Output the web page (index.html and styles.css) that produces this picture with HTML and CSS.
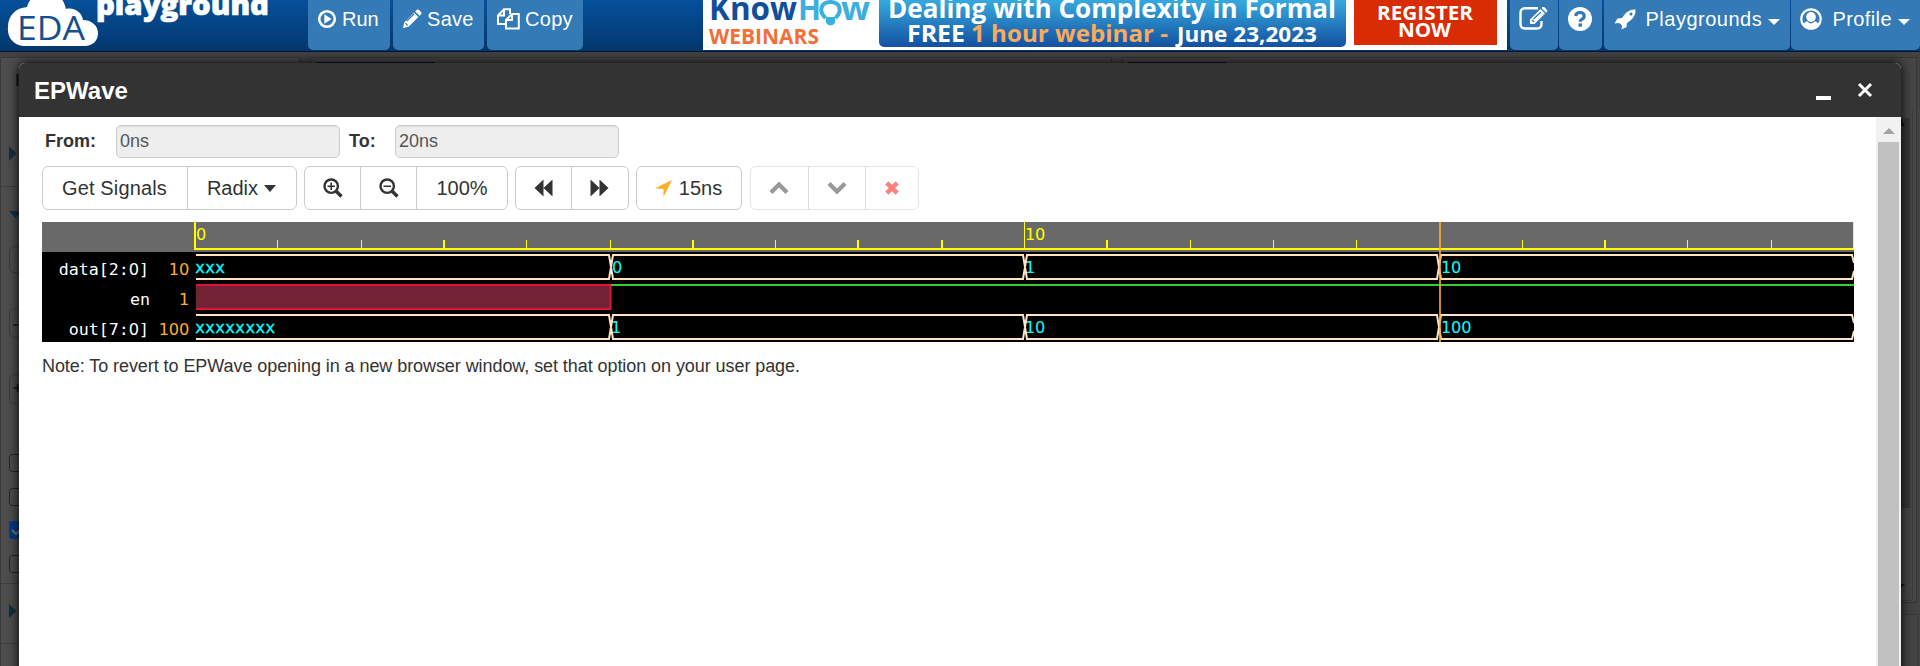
FILE: index.html
```
<!DOCTYPE html>
<html lang="en">
<head>
<meta charset="utf-8">
<title>EPWave</title>
<link rel="stylesheet" href="styles.css">
</head>
<body>
<header class="navbar">
  <svg class="logo" width="275" height="51" viewBox="0 0 275 51" role="img" aria-label="EDA playground">
    <path class="cloud" d="M24 46C12 45 7 36 8 27C8 15 16 8 27 7C28 3 30 0 32-2H61C64 2 65 5 66 9C75 7 82 13 83 20C92 20 98 26 98 33C98 41 93 45 86 46Z"/>
    <text class="logo-eda" x="17" y="40" textLength="68" lengthAdjust="spacingAndGlyphs">EDA</text>
    <text class="logo-name" x="96" y="15" textLength="173" lengthAdjust="spacingAndGlyphs">playground</text>
  </svg>
  <nav class="actions">
    <a class="nav-btn run"><svg width="20" height="20" viewBox="0 0 20 20"><circle cx="10" cy="10" r="7.8" fill="none" stroke="#fff" stroke-width="2.6"/><path d="M7.3 5.3L14.6 10L7.3 14.7Z"/></svg><span>Run</span></a>
    <a class="nav-btn save"><svg width="20" height="20" viewBox="0 0 20 20"><path d="M1 19L2.2 13.4L12 3.6L16.4 8L6.6 17.8ZM13.2 2.4L14.8.8Q15.8 0 16.8.8L19.2 3.2Q20 4.2 19.2 5.2L17.6 6.8Z"/><path class="cut" d="M3.4 14.2L5.8 16.6M4.8 12L12.2 4.8"/></svg><span>Save</span></a>
    <a class="nav-btn copy"><svg width="23" height="22" viewBox="0 0 23 22"><path class="line" d="M8 16H1V7.5L7 1.200H13V6M7 1.200V7.500H1M9 20.600V12L15 6H21.800V20.600ZM15 6V12H9"/></svg><span>Copy</span></a>
  </nav>
  <svg class="banner" width="804" height="50" viewBox="0 0 804 50" role="img" aria-label="KnowHow Webinars">
    <defs><linearGradient id="sky" x2="0" y2="1"><stop stop-color="#36a7dc"/><stop offset=".2" stop-color="#36a7dc"/><stop offset="1" stop-color="#1351a0"/></linearGradient></defs>
    <rect width="804" height="50" fill="#fff"/>
    <text class="know" x="6" y="20" textLength="88" lengthAdjust="spacingAndGlyphs">Know</text>
    <text class="how" x="95" y="20" textLength="23" lengthAdjust="spacingAndGlyphs">H</text>
    <path d="M122.500 18C115 11 118 2 127.500 2S140 11 132.500 18" fill="none" stroke="#3bb0de" stroke-width="4"/><path d="M123 17H132V23Q127.500 28 123 23Z" fill="#3bb0de"/>
    <text class="how" x="138" y="20" textLength="29" lengthAdjust="spacingAndGlyphs">w</text>
    <text class="web" x="6" y="44" textLength="110" lengthAdjust="spacingAndGlyphs">WEBINARS</text>
    <rect x="176" y="-10" width="467" height="57" rx="5" fill="url(#sky)"/>
    <text class="headline" x="185" y="17.500" textLength="448" lengthAdjust="spacingAndGlyphs">Dealing with Complexity in Formal</text>
    <text class="subline" x="204" y="42" textLength="58" lengthAdjust="spacingAndGlyphs">FREE</text>
    <text class="subline accent" x="268" y="42" textLength="197" lengthAdjust="spacingAndGlyphs">1 hour webinar -</text>
    <text class="subline date" x="474" y="42" textLength="140" lengthAdjust="spacingAndGlyphs">June 23,2023</text>
    <rect x="651" y="-1" width="143" height="46" fill="#d92b04"/>
    <text class="register" x="674" y="20" textLength="96" lengthAdjust="spacingAndGlyphs">REGISTER</text>
    <text class="register" x="695" y="37" textLength="53" lengthAdjust="spacingAndGlyphs">NOW</text>
  </svg>
  <nav class="account">
    <a class="nav-btn edit"><svg width="30" height="26" viewBox="0 0 30 26"><path class="line edit-box" d="M19 1.300H6Q1.500 1.300 1.500 6V17Q1.500 21.500 6 21.500H18Q22.500 21.500 22.500 17V14"/><path d="M11 17V12.500L21.500 2L26 6.500L15.500 17ZM22.500 1L23.500 0Q24.500-.5 25.500.3L28 3Q28.500 4 28 4.800L27 5.800Z"/><path class="cut" d="M13 13L15 15M14.500 12L22 5"/></svg></a>
    <a class="nav-btn help"><svg width="26" height="26" viewBox="0 0 26 26"><circle cx="13" cy="12" r="12"/><path d="M8.700 9Q9 5.500 13 5.500T17.200 9Q17.200 11.200 15 12.300Q13.200 13.200 13.200 14.800" fill="none" stroke="#337ab7" stroke-width="3.200"/><rect x="11.500" y="16.400" width="3.500" height="3.300" fill="#337ab7"/></svg></a>
    <a class="nav-btn playgrounds"><svg width="22" height="22" viewBox="0 0 22 22"><path d="M21.500 1.500Q15 1.200 11 6L8 10L3.500 10.500L.5 15.500L5 15Q7 16 8 17.500L7.500 21.500L12.500 19L13 15L17 12Q21.800 8 21.500 1.500Z"/><circle cx="17" cy="6" r="1.500" fill="#337ab7"/></svg><span>Playgrounds</span><i class="caret"></i></a>
    <a class="nav-btn profile"><svg width="22" height="22" viewBox="0 0 22 22"><circle cx="11" cy="11" r="9.700" fill="none" stroke="#fff" stroke-width="2.200"/><ellipse cx="11" cy="9" rx="4.800" ry="5"/><path d="M3.500 16Q5 13.500 7 13.300Q11 17.500 15 13.300Q17 13.500 18.500 16Q15.500 21 11 21T3.500 16Z"/></svg><span>Profile</span><i class="caret"></i></a>
  </nav>
</header>

<main class="stage">
  <svg class="backdrop" width="1920" height="614" viewBox="0 52 1920 614" aria-hidden="true">
    <rect y="52" width="1920" height="614" fill="#424242"/>
    <rect x=".5" y="57.5" width="299" height="620" fill="#4d4d4d" stroke="#3a3a3a"/>
    <rect x="310.5" y="57.5" width="801" height="620" fill="#464646" stroke="#363636" />
    <rect x="1122.5" y="57.5" width="794" height="545" fill="#464646" stroke="#363636"/>
    <path d="M316 62.5H435M1128 62.5H1226" stroke="#0a1638"/>
    <rect x="1901" y="118" width="9" height="390" fill="#363636"/>
    <path d="M1912.5 110V600M1901 600.5H1912" stroke="#3a3a3a"/>
    <rect x="1880.5" y="614.5" width="37" height="70" fill="#444" stroke="#383838"/>
    <path d="M1898 126L1901 119L1905 126ZM1900 584H1905L1901 588Z" fill="#111"/>
    <path d="M9 146L16.5 153.500L9 161ZM9 211H22L15.500 218ZM9 604L16.500 611L9 618Z" fill="#122f43"/>
    <path d="M1 186.500H19M1 583.500H19M1 643.500H19" stroke="#3e3e3e"/>
    <g fill="none" stroke="#3c3c3c"><rect x="9.500" y="246.500" width="30" height="26" rx="5"/><rect x="9.500" y="308.500" width="30" height="29" rx="5"/><rect x="9.500" y="374.500" width="30" height="29" rx="5"/></g>
    <path d="M13 325H18M13.500 388H22M17.500 384V392" stroke="#151515" stroke-width="1.500"/>
    <g fill="none" stroke="#252525"><rect x="9.500" y="454.500" width="17" height="17" rx="3"/><rect x="9.500" y="488.500" width="17" height="17" rx="3"/><rect x="9.500" y="555.500" width="17" height="17" rx="3"/></g>
    <rect x="9" y="521" width="18" height="18" rx="3" fill="#033c85"/><path d="M12 530L16 534L23 527" fill="none" stroke="#777" stroke-width="2"/>
    <path d="M17.500 74V86" stroke="#0a1022" stroke-width="2"/>
  </svg>
  <section class="dialog">
    <header class="dialog-head">
      <h1>EPWave</h1>
      <div class="window-controls"><i class="minimize"></i><svg width="16" height="16" viewBox="0 0 16 16"><path d="M2 2L14 14M14 2L2 14" stroke="#fff" stroke-width="3"/></svg></div>
    </header>
    <div class="dialog-body">
      <div class="content">
        <div class="range">
          <label class="from-label">From:</label><div class="field">0ns</div>
          <label class="to-label">To:</label><div class="field">20ns</div>
        </div>
        <div class="toolbar">
          <div class="group g1"><button>Get Signals</button><button>Radix<i class="caret"></i></button></div>
          <div class="group g2">
            <button><svg width="20" height="20" viewBox="0 0 20 20"><circle cx="8.200" cy="8.200" r="6.700" class="ring"/><path class="handle" d="M13.200 13.200L18.500 18.500"/><path d="M4.500 8.200H12M8.200 4.500V12" stroke="#333" stroke-width="1.600"/></svg></button>
            <button><svg width="20" height="20" viewBox="0 0 20 20"><circle cx="8.200" cy="8.200" r="6.700" class="ring"/><path class="handle" d="M13.200 13.200L18.500 18.500"/><path d="M4.500 8.200H12" stroke="#333" stroke-width="1.600"/></svg></button>
            <button>100%</button>
          </div>
          <div class="group g3">
            <button><svg width="19" height="18" viewBox="0 0 19 18"><path d="M9.500.5V17.500L.500 9ZM18.500.5V17.500L9.500 9Z"/></svg></button>
            <button><svg width="19" height="18" viewBox="0 0 19 18"><path d="M.500.5V17.500L9.500 9ZM9.500.5V17.500L18.500 9Z"/></svg></button>
          </div>
          <div class="group g4"><button><svg width="17" height="17" viewBox="0 0 17 17"><path fill="#ffad29" d="M17 0L8.500 17V9L0 8.300Z"/></svg><span>15ns</span></button></div>
          <div class="group g5">
            <button><svg width="20" height="14" viewBox="0 0 20 14"><path class="chev" d="M2 11.500L10 3.500L18 11.500"/></svg></button>
            <button><svg width="20" height="14" viewBox="0 0 20 14"><path class="chev" d="M2 2.500L10 10.500L18 2.500"/></svg></button>
            <button><svg width="14" height="14" viewBox="0 0 14 14"><path d="M1.800 1.800L12.200 12.200M12.200 1.800L1.800 12.200" stroke="#ff8080" stroke-width="4.500"/></svg></button>
          </div>
        </div>
        <svg class="wave" width="1812" height="120" viewBox="42 222 1812 120">
          <rect x="42" y="222" width="1812" height="120"/>
          <rect x="42" y="222" width="1812" height="30" fill="#696969"/>
          <g fill="#ff0">
            <rect x="194" y="222" width="2" height="28"/><rect x="194" y="248" width="1660" height="2"/>
            <rect x="1024" y="222" width="1" height="26"/><rect x="1853" y="222" width="1" height="26"/>
            <path d="M277 240h1v8h-1zM361 240h1v8h-1zM443 240h2v8h-2zM526 240h1v8h-1zM610 240h1v8h-1zM692 240h2v8h-2zM775 240h1v8h-1zM857 240h2v8h-2zM941 240h2v8h-2zM1106 240h2v8h-2zM1190 240h1v8h-1zM1273 240h1v8h-1zM1356 240h1v8h-1zM1522 240h1v8h-1zM1604 240h2v8h-2zM1687 240h1v8h-1zM1771 240h1v8h-1z"/>
            <text class="num" x="196" y="240">0</text><text class="num" x="1025" y="240">10</text>
          </g>
          <g class="bus"><path d="M196 255H609L613 279H1023L1027 255H1437L1441 279H1852L1854 271M196 279H609L613 255H1023L1027 279H1437L1441 255H1852L1854 263"/></g>
          <g class="bus"><path d="M196 315H609L613 339H1023L1027 315H1437L1441 339H1852L1854 331M196 339H609L613 315H1023L1027 339H1437L1441 315H1852L1854 323"/></g>
          <rect x="196" y="284" width="415" height="26" fill="#722233"/><path d="M196 285H611M196 309H611M610.500 284V310" fill="none" stroke="#dc143c" stroke-width="2"/>
          <path d="M611 285H1854" stroke="#32cd32" stroke-width="2"/>
          <g fill="#fff"><text x="149" y="275" text-anchor="end">data[2:<tspan class="num">0</tspan>]</text><text x="150" y="305" text-anchor="end">en</text><text x="149" y="335" text-anchor="end">out[7:<tspan class="num">0</tspan>]</text></g>
          <g fill="#ffad29"><text class="num" x="189" y="275" text-anchor="end">10</text><text class="num" x="189" y="305" text-anchor="end">1</text><text class="num" x="189" y="335" text-anchor="end">100</text></g>
          <g fill="#0ff"><text class="unknown" x="195" y="273">xxx</text><text class="num" x="612" y="273">0</text><text class="num" x="1025" y="273">1</text><text class="num" x="1441" y="273">10</text><text class="unknown" x="195" y="333">xxxxxxxx</text><text class="num" x="611" y="333">1</text><text class="num" x="1025" y="333">10</text><text class="num" x="1441" y="333">100</text></g>
          <rect x="1439" y="222" width="2" height="120" fill="#ffad29" opacity=".8"/>
        </svg>
        <p class="note">Note: To revert to EPWave opening in a new browser window, set that option on your user page.</p>
      </div>
      <div class="scrollbar"><i class="arrow-up"></i><div class="thumb"></div></div>
    </div>
  </section>
</main>
</body>
</html>
```
FILE: styles.css
```
* { box-sizing: border-box; }
body { margin: 0; height: 666px; overflow: hidden; background: #444; color: #333; font-family: "Liberation Sans", Arial, sans-serif; }
svg { display: block; flex: none; }
.navbar { display: flex; align-items: flex-start; height: 52px; background: linear-gradient(#05509b, #04407e 65%, #04366b); border-bottom: 1px solid #02162c; }
.logo { margin-right: 33px; }
.cloud { fill: #fff; }
.logo-eda { font: 33px "Open Sans", sans-serif; fill: #15508c; }
.logo-name { font: 800 29px "Open Sans", sans-serif; fill: #fff; stroke: #fff; stroke-width: .7px; }
.actions { display: flex; gap: 3px; width: 395px; }
.nav-btn { display: flex; align-items: flex-start; height: 50px; background: #337ab7; border-radius: 0 0 5px 5px; color: #fff; font-size: 20px; line-height: 23px; padding-top: 8px; }
.nav-btn svg { fill: #fff; }
.nav-btn .line { fill: none; stroke: #fff; stroke-width: 2; }
.nav-btn .edit-box { stroke-width: 2.4; }
.nav-btn .cut { fill: none; stroke: #337ab7; stroke-width: 1.2; }
.nav-btn.run { width: 82px; padding-left: 9px; gap: 5px; }
.nav-btn.save { width: 91px; padding-left: 9px; gap: 5px; letter-spacing: .3px; }
.nav-btn.copy { width: 96px; padding-left: 10px; gap: 5px; letter-spacing: .3px; }
.actions .nav-btn svg { margin-top: 1px; }
.actions .copy svg { margin-top: 0; }
.know { font: bold 33px "Open Sans", sans-serif; fill: #124f9b; }
.how { font: bold 33px "Open Sans", sans-serif; fill: #3bb0de; }
.web { font: bold 22px "Open Sans", sans-serif; fill: #f26f3c; }
.headline { font: bold 26px "Open Sans", sans-serif; fill: #fff; }
.subline { font: bold 24px "Open Sans", sans-serif; fill: #fff; }
.accent { fill: #fbab5c; }
.date { font-size: 22px; }
.register { font: bold 20px "Open Sans", sans-serif; fill: #fff; }
.account { display: flex; padding-left: 3px; }
.edit { width: 48px; padding-left: 9px; margin-right: 1px; }
.help { width: 43.5px; padding-left: 8px; margin-right: 2px; }
.account .edit, .account .help { padding-top: 7px; }
.playgrounds { width: 185.5px; padding-left: 10px; letter-spacing: .5px; }
.playgrounds span { margin-left: 9.5px; }
.profile { width: 129.5px; padding-left: 9px; margin-left: 1px; letter-spacing: .4px; }
.profile span { margin-left: 11px; }
.caret { width: 0; height: 0; border: 6px solid transparent; border-top-color: currentColor; border-bottom: 0; margin-left: 6px; }
.nav-btn .caret { margin-top: 11px; }
.stage { display: grid; height: 614px; overflow: hidden; }
.backdrop, .dialog { grid-area: 1 / 1; }
.dialog { display: flex; flex-direction: column; margin: 11px 19px 0; height: 620px; width: 1882px; background: #fff; border-radius: 6px 6px 0 0; box-shadow: 0 0 12px #000; overflow: hidden; }
.dialog-head { display: flex; justify-content: space-between; align-items: center; height: 54px; flex: none; background: #333; color: #fff; padding: 0 28px 0 15px; }
h1 { margin: 0; padding-top: 1px; font-size: 24px; line-height: 54px; }
.window-controls { display: flex; align-items: center; gap: 26px; }
.minimize { width: 15px; height: 4px; background: #fff; margin-top: 16px; }
.dialog-body { display: flex; flex: 1; }
.content { flex: 1; padding: 8px 22px 0 23px; }
.range { display: flex; align-items: center; height: 33px; font-size: 18px; font-weight: bold; }
.from-label { width: 74px; padding-left: 3px; }
.to-label { width: 55px; padding-left: 9px; }
.field { width: 224px; height: 33px; border: 1px solid #ccc; border-radius: 5px; background: #eee; box-shadow: inset 0 1px 1px rgba(0, 0, 0, .08); color: #555; font-weight: normal; line-height: 31px; padding-left: 3px; }
.toolbar { display: flex; margin-top: 8px; height: 44px; }
.group { display: flex; border: 1px solid #ccc; border-radius: 6px; margin-right: 7px; }
.group button { display: flex; align-items: center; justify-content: center; padding: 0; border: 0; border-left: 1px solid #ccc; background: none; color: #333; font: 20px "Liberation Sans", Arial, sans-serif; }
.group button:first-child { border-left: 0; }
.g1 { width: 255px; }
.g1 button:first-child { width: 144px; letter-spacing: .15px; }
.g1 button { width: 109px; padding-right: 1px; }
.g2 { width: 204px; }
.g2 button:first-child { width: 55px; }
.g2 button:nth-child(2) { width: 56px; }
.g2 button:last-child { width: 91px; }
.g3 { width: 114px; }
.g3 button { width: 57px; padding-right: 2px; }
.g3 button:first-child { width: 55px; padding-right: 0; }
.g4 { width: 106px; }
.g4 button { width: 104px; gap: 7px; padding-right: 1px; }
.g4 { margin-right: 8px; }
.g5 { width: 169px; border-color: #e4e4e4; }
.g5 button { width: 58px; border-color: #ddd; }
.g5 button:first-child { width: 57px; }
.g5 button:last-child { width: 53px; }
.group svg { fill: #333; }
.group .ring { fill: none; stroke: #333; stroke-width: 2.4; }
.group .handle { stroke: #333; stroke-width: 3.5; }
.group .chev { fill: none; stroke: #999; stroke-width: 4.2; }
.g1 .caret { border-top-width: 7px; margin-left: 6px; }
.wave { margin-top: 12px; }
.wave text { font: 16.67px "DejaVu Sans Mono", monospace; }
.wave .num { font: 16.2px "DejaVu Sans", sans-serif; letter-spacing: -.2px; }
.wave .unknown { stroke: #0ff; stroke-width: .3px; }
.bus path { fill: none; stroke: #ffe4c4; stroke-width: 2; }
.note { margin: 13px 0 0; font-size: 18px; line-height: 23px; letter-spacing: -.07px; }
.scrollbar { width: 25px; background: #f1f1f1; padding: 0 2px; }
.arrow-up { display: block; width: 0; margin: 11px 0 8px 5px; border: 6px solid transparent; border-top: 0; border-bottom: 6px solid #a3a3a3; }
.thumb { height: 560px; background: #c1c1c1; }
```
